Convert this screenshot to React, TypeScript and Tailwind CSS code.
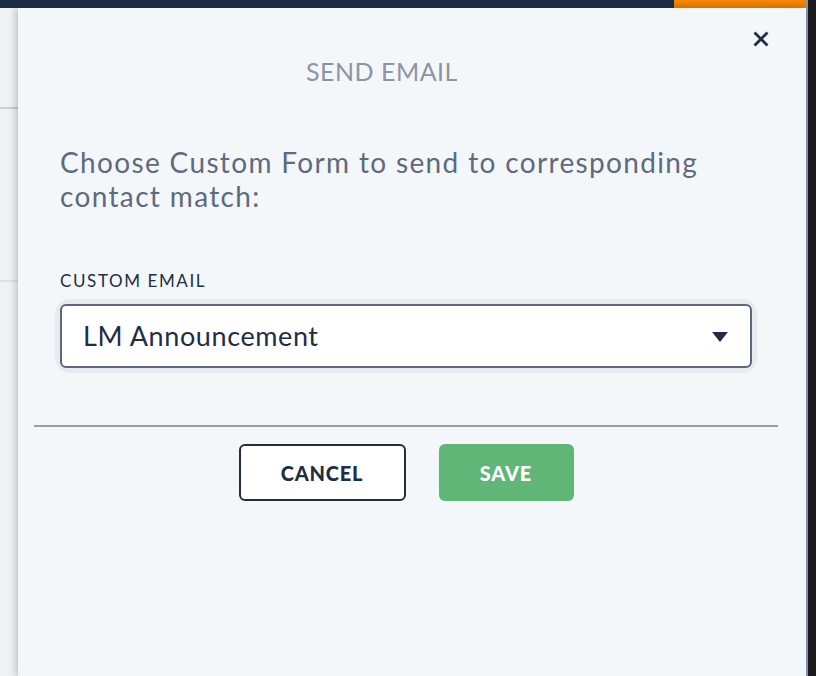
import * as React from "react";

const FONT = "font-['Lato','Noto_Sans',sans-serif]";

function CloseIcon() {
  return (
    <svg width="16" height="16" viewBox="0 0 16 16" fill="none" aria-hidden>
      <path d="M2.5 2.5 13.5 13.5M13.5 2.5 2.5 13.5" stroke="#1f2d45" strokeWidth="2.8" strokeLinecap="square" />
    </svg>
  );
}

export default function App() {
  const [value, setValue] = React.useState("LM Announcement");

  return (
    <div className={`flex h-[676px] w-[816px] overflow-hidden bg-[#1b1b1b] ${FONT}`}>
      <div className="flex flex-1 flex-col">
        {/* top app bar peeking behind the drawer */}
        <div className="flex h-2 shrink-0">
          <div className="flex-1 bg-[#1d2c44]" />
          <div className="w-[132px] bg-gradient-to-b from-[#f58a00] to-[#e27a05]" />
        </div>

        <div className="flex flex-1">
          {/* page content behind */}
          <div className="flex w-[18px] shrink-0 flex-col bg-[#f1f2f4]">
            <div className="h-[99px]" />
            <div className="h-[2px] bg-[#c9cdd4]" />
            <div className="h-[171px]" />
            <div className="h-[2px] bg-[#dde0e5]" />
          </div>

          {/* drawer */}
          <section className="relative z-10 flex flex-1 flex-col bg-[#f4f7fa] pl-[42px] pr-[54px] pt-[47px] shadow-[-3px_0_6px_rgba(30,40,60,0.22)]">
            <button type="button" className="absolute right-[35px] top-[21px] p-0.5">
              <CloseIcon />
            </button>

            <h2 className="pr-[48px] text-center text-[25px] leading-8 tracking-[0.5px] text-[#8b95a5]">SEND EMAIL</h2>

            <p className="mt-[58px] text-[28px] leading-[34px] tracking-[1.35px] text-[#5e6a7d]">
              Choose Custom Form to send to corresponding contact match:
            </p>

            <label className="mt-[58px] block text-[17px] leading-5 tracking-[1.6px] text-[#1f2d45]">CUSTOM EMAIL</label>

            <div className="mt-[13px] rounded-[10px] ring-[5px] ring-[#e7ebef]">
              <div className="relative flex h-16 items-center rounded-md border-2 border-[#5b677c] bg-white pl-[21px]">
                <select
                  value={value}
                  onChange={(e) => setValue(e.target.value)}
                  className="h-full w-full appearance-none bg-transparent text-[27px] tracking-[0.6px] text-[#1f2d45] outline-none"
                >
                  <option>LM Announcement</option>
                  <option>Newsletter</option>
                </select>
                <svg className="pointer-events-none absolute right-[22px] top-[26px]" width="16" height="10" viewBox="0 0 16 10" aria-hidden>
                  <path d="M0 0h16L8 10z" fill="#1f2d45" />
                </svg>
              </div>
            </div>

            <div className="-ml-[26px] -mr-[26px] mt-[57px] h-[2px] bg-[#959eac]" />

            <div className="mt-[17px] flex justify-center gap-[33px]">
              <button
                type="button"
                className="h-[57px] w-[167px] rounded-md border-2 border-[#1f2d45] bg-white text-[20px] font-black tracking-[0.8px] text-[#1f2d45]"
              >
                CANCEL
              </button>
              <button
                type="button"
                className="h-[57px] w-[135px] rounded-md bg-[#5fb677] text-[20px] font-black tracking-[0.8px] text-white"
              >
                SAVE
              </button>
            </div>
          </section>
        </div>
      </div>

      <div className="w-[2px] bg-[#8396ad]" />
      <div className="w-2 bg-[#1b1b1b]" />
    </div>
  );
}
